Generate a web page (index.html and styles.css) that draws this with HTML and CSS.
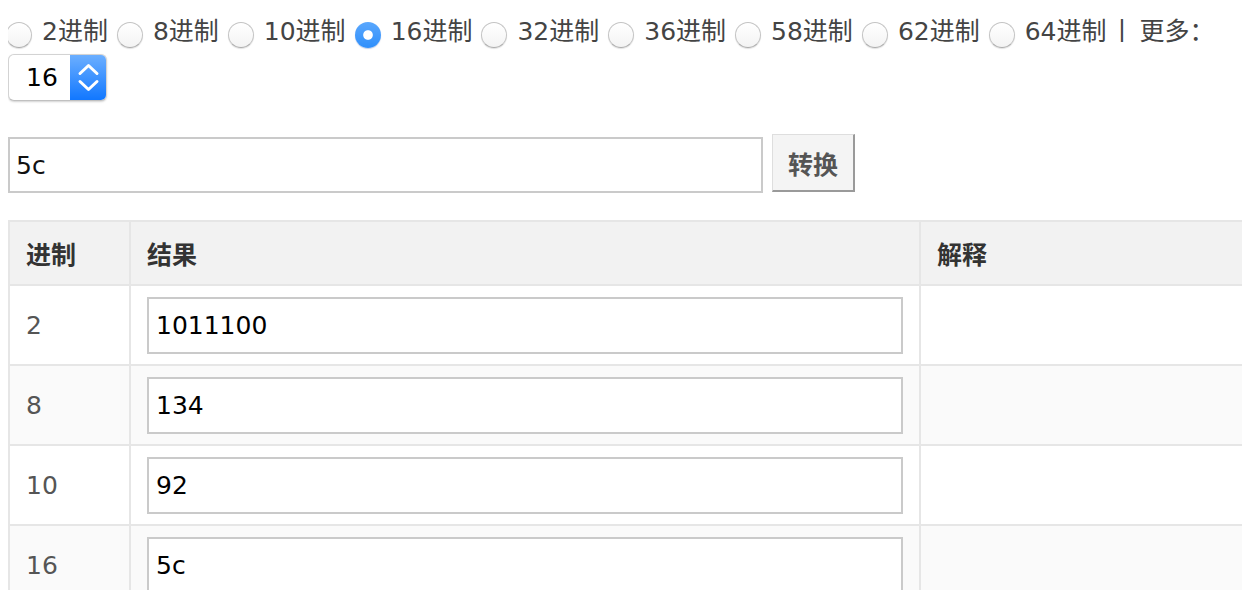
FILE: index.html
```html
<!DOCTYPE html>
<html lang="zh-CN">
<head>
<meta charset="utf-8">
<title>进制转换</title>
<link rel="stylesheet" href="styles.css">
</head>
<body>
<div class="bases">
  <label class="opt"><input type="radio" name="base"><span>2进制</span></label>
  <label class="opt"><input type="radio" name="base"><span>8进制</span></label>
  <label class="opt"><input type="radio" name="base"><span>10进制</span></label>
  <label class="opt"><input type="radio" name="base" checked><span>16进制</span></label>
  <label class="opt"><input type="radio" name="base"><span>32进制</span></label>
  <label class="opt"><input type="radio" name="base"><span>36进制</span></label>
  <label class="opt"><input type="radio" name="base"><span>58进制</span></label>
  <label class="opt"><input type="radio" name="base"><span>62进制</span></label>
  <label class="opt"><input type="radio" name="base"><span>64进制</span></label>
  <span class="more"><span class="sep">丨</span><span class="more-text">更多：</span></span>
  <div class="select">
    <span class="select-val">16</span>
    <span class="select-spin">
      <svg width="37" height="47" viewBox="0 0 37 47" aria-hidden="true">
        <path d="M10 19.5 L18.5 11.5 L27 19.5" fill="none" stroke="#fff" stroke-width="3" stroke-linecap="round" stroke-linejoin="round"/>
        <path d="M10 27.5 L18.5 35.5 L27 27.5" fill="none" stroke="#fff" stroke-width="3" stroke-linecap="round" stroke-linejoin="round"/>
      </svg>
    </span>
  </div>
</div>

<div class="form">
  <input class="src" type="text" value="5c">
  <button class="btn" type="button">转换</button>
</div>

<table class="result">
  <colgroup>
    <col class="c-base">
    <col class="c-val">
    <col class="c-desc">
  </colgroup>
  <thead>
    <tr><th>进制</th><th>结果</th><th>解释</th></tr>
  </thead>
  <tbody>
    <tr><td class="num">2</td><td><input class="out" type="text" value="1011100"></td><td></td></tr>
    <tr><td class="num">8</td><td><input class="out" type="text" value="134"></td><td></td></tr>
    <tr><td class="num">10</td><td><input class="out" type="text" value="92"></td><td></td></tr>
    <tr><td class="num">16</td><td><input class="out" type="text" value="5c"></td><td></td></tr>
  </tbody>
</table>
</body>
</html>
```

FILE: styles.css
```css
html {
  overflow: hidden;
}
body {
  margin: 8px 0 8px 8px;
  background: #fff;
  font-family: "DejaVu Sans", "Noto Sans CJK SC", sans-serif;
  font-size: 25px;
  color: #444;
}

.bases {
  display: flex;
  flex-wrap: wrap;
  align-items: center;
  margin-right: 8px;
}
.opt {
  display: inline-flex;
  align-items: center;
  height: 46px;
  margin-right: 11px;
  color: #444;
}
.opt span {
  margin-bottom: 4px;
}
.opt input {
  -webkit-appearance: none;
  appearance: none;
  width: 26px;
  height: 26px;
  margin: 7px 10px 0 -2px;
  border-radius: 50%;
  border: 1px solid #c4c4c4;
  border-bottom-color: #adadad;
  background: linear-gradient(#ffffff, #f3f3f3);
  box-shadow: 0 1px 1px rgba(0, 0, 0, 0.12);
  box-sizing: border-box;
  flex: none;
}
.opt input:checked {
  border: none;
  background:
    radial-gradient(circle at 50% 50%, #ffffff 0 4.3px, rgba(255,255,255,0) 5.3px),
    linear-gradient(#5aa7fd, #2f8ffb);
  box-shadow: 0 1px 1px rgba(0, 60, 160, 0.25);
}

.more {
  display: inline-flex;
  align-items: center;
  height: 46px;
}
.more > span {
  margin-bottom: 4px;
}
.sep {
  margin-left: -8px;
  margin-right: 5px;
}

.select {
  display: flex;
  width: 99px;
  height: 47px;
  box-sizing: border-box;
  border: 1px solid #d3d3d3;
  border-bottom-color: #c0c0c0;
  border-radius: 6px;
  background: #fff;
  box-shadow: 0 1px 2px rgba(0, 0, 0, 0.18);
  overflow: hidden;
}
.select-val {
  flex: 1;
  display: flex;
  align-items: center;
  padding-left: 17px;
  color: #000;
}
.select-spin {
  width: 37px;
  display: flex;
  align-items: center;
  justify-content: center;
  background: linear-gradient(#6eb0ff, #0f76ff);
  margin: -1px -1px -1px 0;
}
.select-spin svg {
  display: block;
}

.form {
  display: flex;
  align-items: flex-start;
  margin-top: 33px;
}
.src {
  width: 755px;
  height: 56px;
  margin-top: 3px;
  box-sizing: border-box;
  border: 2px solid #cacaca;
  padding: 0 6px;
  font: inherit;
  color: #111;
  outline: none;
}
.btn {
  margin-left: 9px;
  width: 83px;
  height: 58px;
  box-sizing: border-box;
  background: #f4f4f4;
  border: 1px solid #dedede;
  border-right: 2px solid #9a9a9a;
  border-bottom: 2px solid #9a9a9a;
  font: inherit;
  font-weight: bold;
  color: #555;
  padding: 0;
}

.result {
  margin-top: 27px;
  border-collapse: collapse;
  table-layout: fixed;
  width: 100%;
  border: 2px solid #e6e6e6;
  border-right: none;
}
.c-base { width: 121px; }
.c-val { width: 790px; }
.result th,
.result td {
  border: 2px solid #e6e6e6;
  padding: 0 16px;
  text-align: left;
  vertical-align: middle;
}
.result th:last-child,
.result td:last-child {
  border-right: none;
}
.result thead tr {
  height: 64px;
  background: #f2f2f2;
}
.result th {
  font-weight: bold;
  color: #333;
}
.result tbody tr {
  height: 80px;
  background: #fff;
}
.result tbody tr:nth-child(even) {
  background: #fafafa;
}
.result td.num {
  color: #555;
}
.out {
  display: block;
  width: 100%;
  height: 57px;
  box-sizing: border-box;
  border: 2px solid #cacaca;
  padding: 0 7px;
  font: inherit;
  color: #000;
  background: #fff;
  outline: none;
}
```
